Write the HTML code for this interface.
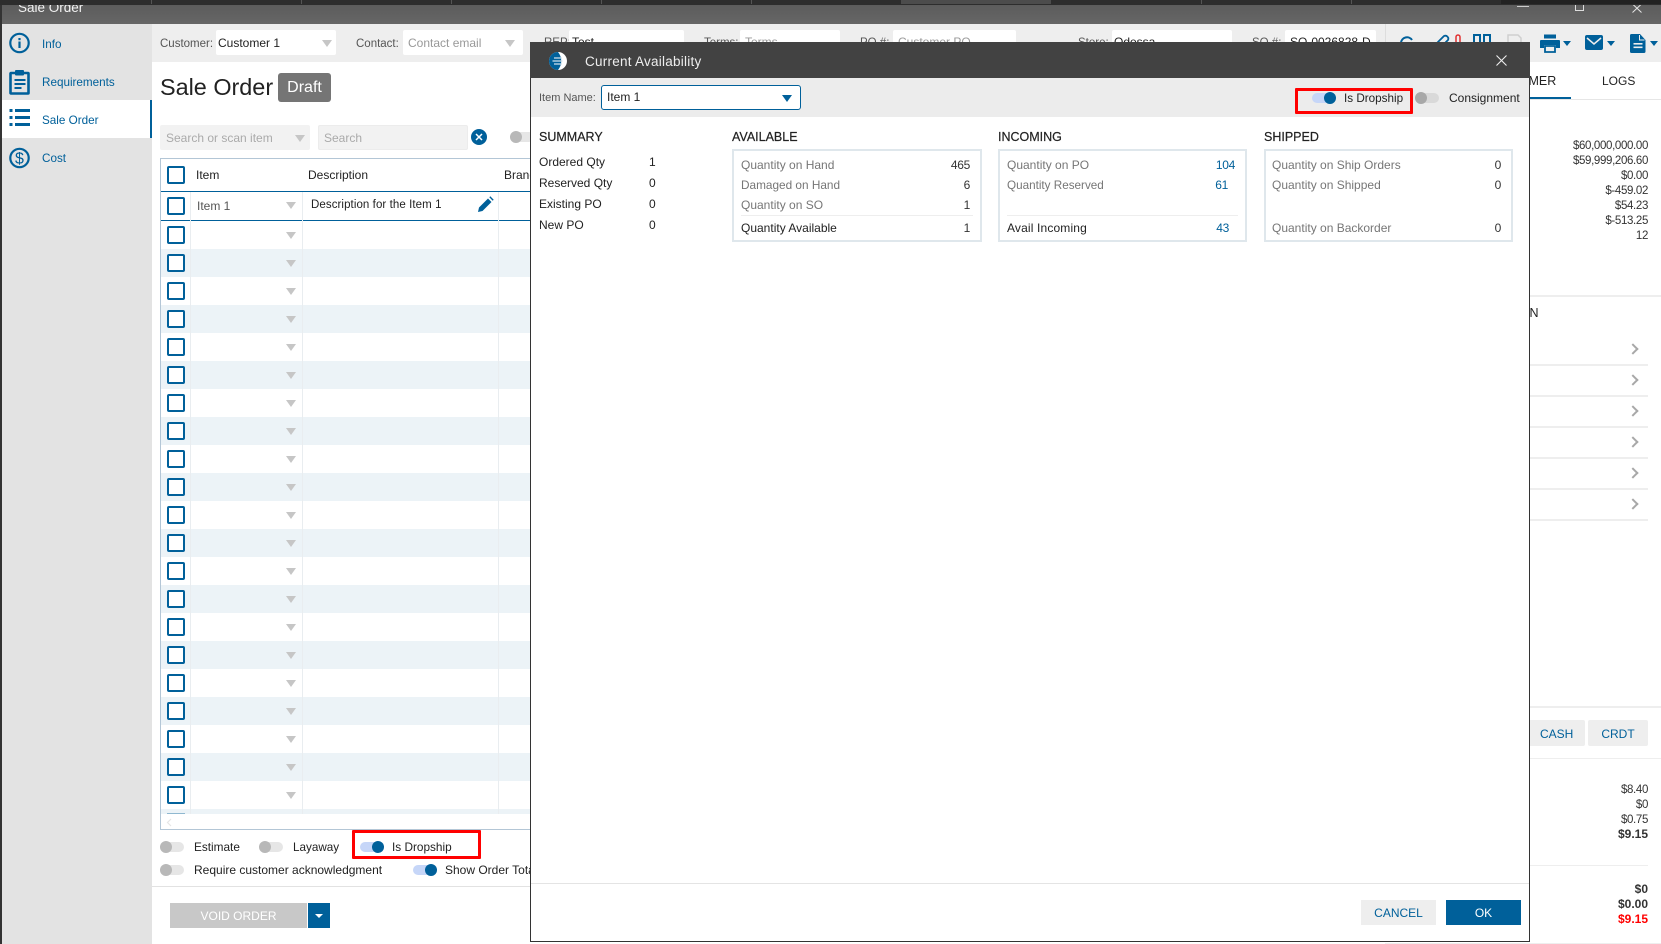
<!DOCTYPE html>
<html><head><meta charset="utf-8"><title>Sale Order</title>
<style>
*{box-sizing:border-box}
html,body{margin:0;padding:0;width:1661px;height:944px;overflow:hidden;background:#fff;font-family:"Liberation Sans",sans-serif;font-size:12px;color:#333}
.a{position:absolute;white-space:nowrap;line-height:16px}
.b{position:absolute}
.lb{color:#555;font-size:11.5px}
.sel{position:absolute;background:#fff;border-radius:2px;height:25px}
.arr{position:absolute;width:0;height:0;border-left:5px solid transparent;border-right:5px solid transparent;border-top:7px solid #c6c6c6}
.cb{position:absolute;left:167px;width:18px;height:18px;border:2px solid #00609a;border-radius:2px;background:#fff}
.row{position:absolute;left:161px;width:370px;height:28px}
.t{position:absolute;width:24px;height:10px;border-radius:5px;background:#e6e6e6}
.t i{position:absolute;left:0;top:-1px;width:12px;height:12px;border-radius:50%;background:#b8b8b8}
.t.on{background:#c6d6f8}
.t.on i{left:12px;background:#00609a}
.t.d{background:#d9d9d9}
.t.d i{background:#a8a8a8}
.blue{color:#00609a}
.side{font-size:11.7px}
.box{position:absolute;top:149px;height:93px;border:2px solid #dfe7ec;background:#fff}
.g{color:#767676}
.k{color:#222}
.h{font-size:12.5px;color:#222;-webkit-text-stroke:.2px #222}
.r{text-align:right;letter-spacing:-.3px}
.am{font-size:11.5px;letter-spacing:-.35px;color:#333}
.ln{position:absolute;background:#eeeeee;height:1px}
.chev{position:absolute;left:1629px;width:8px;height:8px;border-top:2px solid #a8a8a8;border-right:2px solid #a8a8a8;transform:rotate(45deg)}
</style></head><body>

<!-- top tabs -->
<div class="b" style="left:0;top:0;width:1661px;height:5px;background:#2d2d2d"></div>
<div class="b" style="left:901px;top:0;width:150px;height:4px;background:#4c4c4c"></div>
<div class="b" style="left:1501px;top:0;width:160px;height:4px;background:#222"></div>
<div class="b" style="left:151px;top:0;width:1px;height:4px;background:#555"></div>
<div class="b" style="left:301px;top:0;width:1px;height:4px;background:#555"></div>
<div class="b" style="left:451px;top:0;width:1px;height:4px;background:#555"></div>
<div class="b" style="left:601px;top:0;width:1px;height:4px;background:#555"></div>
<div class="b" style="left:751px;top:0;width:1px;height:4px;background:#555"></div>
<div class="b" style="left:1201px;top:0;width:1px;height:4px;background:#555"></div>
<div class="b" style="left:1351px;top:0;width:1px;height:4px;background:#555"></div>

<!-- title bar -->
<div class="b" style="left:0;top:5px;width:1661px;height:19px;background:linear-gradient(#5c5c5c,#666);overflow:hidden">
  <div class="a" style="left:18px;top:-5px;font-size:13.5px;color:#f2f2f2">Sale Order</div>
</div>
<div class="b" style="left:1517px;top:6px;width:12px;height:1px;background:#ccc"></div>
<div class="b" style="left:1575px;top:5px;width:9px;height:6px;border:1px solid #ddd;border-top:none;"></div>
<svg class="b" style="left:1632px;top:5px" width="10" height="8"><path d="M0.5 -1L9.5 7.5M9.5 -1L0.5 7.5" stroke="#e6e6e6" fill="none"/></svg>

<!-- left edge + sidebar -->
<div class="b" style="left:0;top:5px;width:2px;height:939px;background:#333"></div>
<div class="b" style="left:2px;top:24px;width:150px;height:920px;background:#e3e3e3"></div>
<div class="b" style="left:2px;top:100px;width:150px;height:38px;background:#fff;border-right:2px solid #00609a"></div>

<svg class="b" style="left:8px;top:31px" width="24" height="24"><circle cx="11.5" cy="12" r="9.2" fill="none" stroke="#00609a" stroke-width="2.2"/><rect x="10.4" y="10.5" width="2.2" height="6.5" fill="#00609a"/><rect x="10.4" y="7" width="2.2" height="2.2" fill="#00609a"/></svg>
<svg class="b" style="left:8px;top:68px" width="24" height="28"><path d="M3 5h17a0.5 .5 0 0 1 .5 .5V25a.5 .5 0 0 1-.5 .5H3a.5 .5 0 0 1-.5-.5V5.500a.5 .5 0 0 1 .5-.5z" fill="none" stroke="#00609a" stroke-width="2.6"/><rect x="7" y="2" width="9" height="5.500" rx="1" fill="#00609a"/><rect x="6.500" y="11" width="11" height="2" fill="#00609a"/><rect x="6.500" y="15" width="11" height="2" fill="#00609a"/><rect x="6.500" y="19" width="7" height="2" fill="#00609a"/></svg>
<svg class="b" style="left:8px;top:107px" width="24" height="24"><g fill="#00609a"><rect x="1.500" y="2" width="3" height="3"/><rect x="1.500" y="9" width="3" height="3"/><rect x="1.500" y="16" width="3" height="3"/><rect x="7" y="2" width="15" height="3"/><rect x="7" y="9" width="15" height="3"/><rect x="7" y="16" width="15" height="3"/></g></svg>
<svg class="b" style="left:8px;top:146px" width="24" height="24"><circle cx="11.500" cy="12" r="9.200" fill="none" stroke="#00609a" stroke-width="2.200"/><text x="11.500" y="17.500" text-anchor="middle" font-family="Liberation Sans" font-size="16" fill="#00609a">$</text></svg>

<div class="a blue side" style="left:42px;top:37px">Info</div>
<div class="a blue side" style="left:42px;top:75px">Requirements</div>
<div class="a blue side" style="left:42px;top:113px">Sale Order</div>
<div class="a blue side" style="left:42px;top:151px">Cost</div>

<!-- header strip -->
<div class="b" style="left:152px;top:24px;width:1509px;height:38px;background:#eeeeee"></div>
<div class="b" style="left:1385px;top:24px;width:1px;height:38px;background:#ddd"></div>
<div class="a lb" style="left:160px;top:36px">Customer:</div>
<div class="sel" style="left:216px;top:30px;width:120px"></div>
<div class="a k" style="left:218px;top:35px">Customer 1</div>
<div class="arr" style="left:322px;top:40px"></div>
<div class="a lb" style="left:356px;top:36px">Contact:</div>
<div class="sel" style="left:403px;top:30px;width:120px"></div>
<div class="a" style="left:408px;top:35px;color:#999">Contact email</div>
<div class="arr" style="left:505px;top:40px"></div>

<div class="a lb" style="left:544px;top:35px">REP:</div>
<div class="sel" style="left:569px;top:30px;width:115px"></div>
<div class="a k" style="left:572px;top:34px">Test</div>
<div class="a lb" style="left:704px;top:35px">Terms:</div>
<div class="sel" style="left:740px;top:30px;width:100px"></div>
<div class="a" style="left:745px;top:34px;color:#999">Terms</div>
<div class="a lb" style="left:860px;top:35px">PO #:</div>
<div class="sel" style="left:893px;top:30px;width:123px"></div>
<div class="a" style="left:898px;top:34px;color:#999">Customer PO</div>
<div class="a lb" style="left:1078px;top:35px">Store:</div>
<div class="sel" style="left:1112px;top:30px;width:120px"></div>
<div class="a k" style="left:1114px;top:34px">Odessa</div>
<div class="a lb" style="left:1252px;top:35px">SO #:</div>
<div class="sel" style="left:1285px;top:30px;width:91px"></div>
<div class="a k" style="left:1290px;top:34px">SO-0026828-D</div>

<!-- hidden toolbar icons top pieces -->
<svg class="b" style="left:1398px;top:32px" width="130" height="12">
  <path d="M3 11a6 6 0 0 1 11-3" fill="none" stroke="#00609a" stroke-width="2"/>
  <path d="M39 11l7-7a3 3 0 0 1 4 4l-6 6" fill="none" stroke="#00609a" stroke-width="1.800"/>
  <path d="M58 12V5a2 2 0 0 1 4 0v7" fill="none" stroke="#e03030" stroke-width="1.500"/>
  <path d="M82 12V3h-6v9M86 12V3h6v9" fill="none" stroke="#00609a" stroke-width="2"/>
  <path d="M110 12V3h10l3 3v6" fill="none" stroke="#cfcfcf" stroke-width="1.500"/>
</svg>
<!-- print -->
<svg class="b" style="left:1540px;top:33px" width="20" height="20"><g fill="#00609a"><rect x="4" y="1.500" width="12" height="4"/><path d="M1 7h18a1 1 0 0 1 1 1v7h-4v-3H4v3H0V8a1 1 0 0 1 1-1z"/><path d="M5 13h10v6H5z" fill="none" stroke="#00609a" stroke-width="1.800"/></g></svg>
<svg class="b" style="left:1585px;top:35px" width="18" height="15"><rect width="18" height="15" rx="2" fill="#00609a"/><path d="M2 3l7 6 7-6" fill="none" stroke="#eee" stroke-width="1.500"/></svg>
<svg class="b" style="left:1630px;top:34px" width="16" height="19"><path d="M1.500 0H10l5.500 6v11.500a1.500 1.500 0 0 1-1.500 1.500H1.500A1.500 1.500 0 0 1 0 17.500V1.500A1.500 1.500 0 0 1 1.500 0z" fill="#00609a"/><rect x="3.500" y="9" width="9" height="1.600" fill="#eee"/><rect x="3.500" y="12.500" width="9" height="1.600" fill="#eee"/><path d="M9.500 1v5h5" fill="none" stroke="#eee" stroke-width="1"/></svg>
<div class="arr" style="left:1563px;top:41px;border-left-width:4px;border-right-width:4px;border-top:5px solid #00609a"></div>
<div class="arr" style="left:1607px;top:41px;border-left-width:4px;border-right-width:4px;border-top:5px solid #00609a"></div>
<div class="arr" style="left:1650px;top:41px;border-left-width:4px;border-right-width:4px;border-top:5px solid #00609a"></div>

<!-- page title -->
<div class="a" style="left:160px;top:73px;font-size:23.400px;line-height:28px;color:#222">Sale Order</div>
<div class="b" style="left:278px;top:73px;width:53px;height:29px;background:#757575;border-radius:3px;color:#fff;font-size:16px;line-height:30px;text-align:center">Draft</div>

<!-- search -->
<div class="b" style="left:160px;top:125px;width:150px;height:25px;background:#f2f2f2;border-radius:2px"></div>
<div class="a" style="left:166px;top:130px;color:#aaa">Search or scan item</div>
<div class="arr" style="left:295px;top:135px;"></div>
<div class="b" style="left:318px;top:125px;width:150px;height:25px;background:#f2f2f2;border:1px solid #ececec;border-radius:2px"></div>
<div class="a" style="left:324px;top:130px;color:#aaa">Search</div>
<svg class="b" style="left:471px;top:129px" width="16" height="16"><circle cx="8" cy="8" r="8" fill="#00609a"/><path d="M5 5l6 6M11 5l-6 6" stroke="#fff" stroke-width="1.500"/></svg>
<div class="t" style="left:510px;top:132px"><i></i></div>

<!-- table -->
<div class="b" style="left:160px;top:158px;width:380px;height:672px;border:1px solid #b3c6d6;background:#fff"></div>
<div class="b" style="left:161px;top:191px;width:370px;height:1px;background:#00609a"></div>
<div class="b" style="left:161px;top:220px;width:370px;height:1px;background:#00609a"></div>

<div class="row" style="top:249px;background:#ecf3f7"></div>
<div class="row" style="top:305px;background:#ecf3f7"></div>
<div class="row" style="top:361px;background:#ecf3f7"></div>
<div class="row" style="top:417px;background:#ecf3f7"></div>
<div class="row" style="top:473px;background:#ecf3f7"></div>
<div class="row" style="top:529px;background:#ecf3f7"></div>
<div class="row" style="top:585px;background:#ecf3f7"></div>
<div class="row" style="top:641px;background:#ecf3f7"></div>
<div class="row" style="top:697px;background:#ecf3f7"></div>
<div class="row" style="top:753px;background:#ecf3f7"></div>
<div class="row" style="top:809px;background:#ecf3f7;height:5px"></div>

<div class="b" style="left:190px;top:192px;width:1px;height:622px;background:#e9edf0"></div>
<div class="b" style="left:302px;top:192px;width:1px;height:622px;background:#e9edf0"></div>
<div class="b" style="left:498px;top:192px;width:1px;height:622px;background:#e9edf0"></div>
<div class="b" style="left:161px;top:814px;width:370px;height:15px;background:#fff"></div>
<div class="b" style="left:167px;top:813px;width:18px;height:1px;background:#8fb8d0"></div>
<svg class="b" style="left:166px;top:818px" width="6" height="9"><path d="M5 1L1.500 4.500L5 8" fill="none" stroke="#e6e6e6" stroke-width="1.200"/></svg>

<div class="a k" style="left:196px;top:167px">Item</div>
<div class="a k" style="left:308px;top:167px">Description</div>
<div class="a k" style="left:504px;top:167px">Brand</div>
<div class="a lb" style="left:197px;top:198px;font-size:12px">Item 1</div>
<div class="a k" style="left:311px;top:197px;font-size:11.500px;letter-spacing:.08px;">Description for the Item 1</div>
<svg class="b" style="left:477px;top:196px" width="17" height="17"><path d="M1 16l1-4.500L11 2.500l3.500 3.500-9 9zM12.300 1.300l1-1 3.400 3.400-1 1z" fill="#00609a"/></svg>

<div class="cb" style="top:166px"></div><div class="cb" style="top:197px"></div>
<div class="cb" style="top:226px"></div><div class="cb" style="top:254px"></div><div class="cb" style="top:282px"></div><div class="cb" style="top:310px"></div><div class="cb" style="top:338px"></div><div class="cb" style="top:366px"></div><div class="cb" style="top:394px"></div><div class="cb" style="top:422px"></div><div class="cb" style="top:450px"></div><div class="cb" style="top:478px"></div><div class="cb" style="top:506px"></div><div class="cb" style="top:534px"></div><div class="cb" style="top:562px"></div><div class="cb" style="top:590px"></div><div class="cb" style="top:618px"></div><div class="cb" style="top:646px"></div><div class="cb" style="top:674px"></div><div class="cb" style="top:702px"></div><div class="cb" style="top:730px"></div><div class="cb" style="top:758px"></div><div class="cb" style="top:786px"></div>

<div class="arr" style="left:286px;top:202px"></div>
<div class="arr" style="left:286px;top:232px"></div><div class="arr" style="left:286px;top:260px"></div><div class="arr" style="left:286px;top:288px"></div><div class="arr" style="left:286px;top:316px"></div><div class="arr" style="left:286px;top:344px"></div><div class="arr" style="left:286px;top:372px"></div><div class="arr" style="left:286px;top:400px"></div><div class="arr" style="left:286px;top:428px"></div><div class="arr" style="left:286px;top:456px"></div><div class="arr" style="left:286px;top:484px"></div><div class="arr" style="left:286px;top:512px"></div><div class="arr" style="left:286px;top:540px"></div><div class="arr" style="left:286px;top:568px"></div><div class="arr" style="left:286px;top:596px"></div><div class="arr" style="left:286px;top:624px"></div><div class="arr" style="left:286px;top:652px"></div><div class="arr" style="left:286px;top:680px"></div><div class="arr" style="left:286px;top:708px"></div><div class="arr" style="left:286px;top:736px"></div><div class="arr" style="left:286px;top:764px"></div><div class="arr" style="left:286px;top:792px"></div>

<!-- bottom toggles -->
<div class="t" style="left:160px;top:842px"><i></i></div>
<div class="a k" style="left:194px;top:839px;font-size:11.800px">Estimate</div>
<div class="t" style="left:259px;top:842px"><i></i></div>
<div class="a k" style="left:293px;top:840px;font-size:11.700px">Layaway</div>
<div class="t on" style="left:360px;top:842px"><i></i></div>
<div class="a k" style="left:392px;top:839px;font-size:11.800px">Is Dropship</div>
<div class="b" style="left:352px;top:830px;width:129px;height:29px;border:3px solid #f00;border-radius:1px"></div>
<div class="t" style="left:160px;top:865px"><i></i></div>
<div class="a k" style="left:194px;top:862px">Require customer acknowledgment</div>
<div class="t on" style="left:413px;top:865px"><i></i></div>
<div class="a k" style="left:445px;top:862px">Show Order Total</div>
<div class="b" style="left:152px;top:886px;width:378px;height:1px;background:#e2e2e2"></div>
<div class="b" style="left:170px;top:903px;width:137px;height:25px;background:#c8c8c8;color:#fff;text-align:center;line-height:27px">VOID ORDER</div>
<div class="b" style="left:308px;top:903px;width:22px;height:25px;background:#00609a"></div>
<div class="arr" style="left:315px;top:914px;border-left-width:4px;border-right-width:4px;border-top:4px solid #fff"></div>

<!-- right panel -->
<div class="a k" style="left:1485px;top:73px;font-size:12.500px">CUSTOMER</div>
<div class="a k" style="left:1602px;top:73px;font-size:12px">LOGS</div>
<div class="b" style="left:1500px;top:99px;width:161px;height:1px;background:#e6e6e6"></div>
<div class="b" style="left:1500px;top:97px;width:71px;height:2px;background:#00609a"></div>
<div class="a r am" style="right:13px;top:138px">$60,000,000.00</div>
<div class="a r am" style="right:13px;top:153px">$59,999,206.60</div>
<div class="a r am" style="right:13px;top:168px">$0.00</div>
<div class="a r am" style="right:13px;top:183px">$-459.02</div>
<div class="a r am" style="right:13px;top:198px">$54.23</div>
<div class="a r am" style="right:13px;top:213px">$-513.25</div>
<div class="a r am" style="right:13px;top:228px">12</div>
<div class="ln" style="left:1500px;top:295px;width:161px;height:2px"></div>
<div class="a k" style="left:1452px;top:305px;font-size:12.500px">INFORMATION</div>
<div class="chev" style="top:345px"></div><div class="chev" style="top:376px"></div><div class="chev" style="top:407px"></div><div class="chev" style="top:438px"></div><div class="chev" style="top:469px"></div><div class="chev" style="top:500px"></div>
<div class="ln" style="left:1500px;top:364px;width:148px;height:2px"></div>
<div class="ln" style="left:1500px;top:395px;width:148px;height:2px"></div>
<div class="ln" style="left:1500px;top:426px;width:148px;height:2px"></div>
<div class="ln" style="left:1500px;top:457px;width:148px;height:2px"></div>
<div class="ln" style="left:1500px;top:488px;width:148px;height:2px"></div>
<div class="ln" style="left:1500px;top:519px;width:148px;height:2px"></div>
<div class="ln" style="left:1500px;top:706px;width:161px;height:2px"></div>
<div class="b blue" style="left:1500px;top:720px;width:85px;height:26px;background:#eee;border-radius:2px;line-height:28px;padding-left:40px">CASH</div>
<div class="b blue" style="left:1588px;top:720px;width:60px;height:26px;background:#eee;border-radius:2px;line-height:28px;text-align:center">CRDT</div>
<div class="ln" style="left:1500px;top:758px;width:161px"></div>
<div class="a r am" style="right:13px;top:782px">$8.40</div>
<div class="a r am" style="right:13px;top:797px">$0</div>
<div class="a r am" style="right:13px;top:812px">$0.75</div>
<div class="a" style="right:13px;top:826px;font-weight:bold">$9.15</div>
<div class="ln" style="left:1500px;top:865px;width:148px"></div>
<div class="a" style="right:13px;top:881px;font-weight:bold">$0</div>
<div class="a" style="right:13px;top:896px;font-weight:bold">$0.00</div>
<div class="a" style="right:13px;top:911px;font-weight:bold;color:#f00">$9.15</div>
<div class="ln" style="left:1385px;top:943px;width:276px"></div>

<!-- MODAL -->
<div class="b" style="left:530px;top:42px;width:1000px;height:900px;background:#fff;border:1px solid #333"></div>
<div class="b" style="left:530px;top:42px;width:1000px;height:36px;background:#424242"></div>
<div class="b" style="left:531px;top:78px;width:998px;height:39px;background:#ececec"></div>
<svg class="b" style="left:548px;top:51px" width="20" height="20"><circle cx="10" cy="10" r="9" fill="#fff"/><path d="M10 1a9 9 0 0 0 0 18 14 14 0 0 0 0-18z" fill="#00609a"/><g stroke="#cfe0ec" stroke-width="1.300"><path d="M6 7h8M4.500 10h10M6 13h8"/></g></svg>
<div class="a" style="left:585px;top:54px;color:#eee;font-size:13.500px;letter-spacing:.25px">Current Availability</div>
<svg class="b" style="left:1496px;top:55px" width="11" height="11"><path d="M.5.5l10 10M10.500.5l-10 10" stroke="#eee" stroke-width="1.100"/></svg>

<div class="a lb" style="left:539px;top:90px;font-size:11px">Item Name:</div>
<div class="b" style="left:601px;top:85px;width:200px;height:25px;background:#fff;border:1px solid #00609a;border-radius:3px"></div>
<div class="a k" style="left:607px;top:89px">Item 1</div>
<div class="arr" style="left:782px;top:95px;border-top-color:#00609a;"></div>

<div class="t on" style="left:1312px;top:93px"><i></i></div>
<div class="a k" style="left:1344px;top:91px;font-size:11.700px">Is Dropship</div>
<div class="b" style="left:1295px;top:88px;width:118px;height:26px;border:3px solid #f00;border-radius:1px"></div>
<div class="t d" style="left:1415px;top:93px"><i></i></div>
<div class="a k" style="left:1449px;top:90px">Consignment</div>

<!-- summary -->
<div class="a h" style="left:539px;top:129px">SUMMARY</div>
<div class="a k" style="left:539px;top:154px">Ordered Qty</div><div class="a k" style="left:649px;top:154px">1</div>
<div class="a k" style="left:539px;top:175px">Reserved Qty</div><div class="a k" style="left:649px;top:175px">0</div>
<div class="a k" style="left:539px;top:196px">Existing PO</div><div class="a k" style="left:649px;top:196px">0</div>
<div class="a k" style="left:539px;top:217px">New PO</div><div class="a k" style="left:649px;top:217px">0</div>

<!-- available -->
<div class="a h" style="left:732px;top:129px">AVAILABLE</div>
<div class="box" style="left:732px;width:250px"></div>
<div class="a g" style="left:741px;top:157px">Quantity on Hand</div><div class="a r" style="right:691px;top:157px">465</div>
<div class="a g" style="left:741px;top:177px;font-size:11.800px">Damaged on Hand</div><div class="a r" style="right:691px;top:177px">6</div>
<div class="a g" style="left:741px;top:197px">Quantity on SO</div><div class="a r" style="right:691px;top:197px">1</div>
<div class="ln" style="left:741px;top:215px;width:232px"></div>
<div class="a k" style="left:741px;top:220px">Quantity Available</div><div class="a r" style="right:691px;top:220px">1</div>

<!-- incoming -->
<div class="a h" style="left:998px;top:129px">INCOMING</div>
<div class="box" style="left:998px;width:249px"></div>
<div class="a g" style="left:1007px;top:157px">Quantity on PO</div><div class="a r blue" style="right:426px;top:157px">104</div>
<div class="a g" style="left:1007px;top:178px;font-size:11.700px">Quantity Reserved</div><div class="a r blue" style="right:433px;top:177px">61</div>
<div class="ln" style="left:1007px;top:215px;width:231px"></div>
<div class="a k" style="left:1007px;top:220px;letter-spacing:.15px">Avail Incoming</div><div class="a r blue" style="right:432px;top:220px">43</div>

<!-- shipped -->
<div class="a h" style="left:1264px;top:129px">SHIPPED</div>
<div class="box" style="left:1264px;width:249px"></div>
<div class="a g" style="left:1272px;top:157px">Quantity on Ship Orders</div><div class="a r" style="right:160px;top:157px">0</div>
<div class="a g" style="left:1272px;top:177px">Quantity on Shipped</div><div class="a r" style="right:160px;top:177px">0</div>
<div class="a g" style="left:1272px;top:220px">Quantity on Backorder</div><div class="a r" style="right:160px;top:220px">0</div>

<!-- footer -->
<div class="b" style="left:531px;top:883px;width:998px;height:1px;background:#e4e4e4"></div>
<div class="b blue" style="left:1361px;top:900px;width:75px;height:25px;background:#eee;line-height:27px;text-align:center">CANCEL</div>
<div class="b" style="left:1446px;top:900px;width:75px;height:25px;background:#00609a;color:#fff;line-height:27px;text-align:center">OK</div>

</body></html>
